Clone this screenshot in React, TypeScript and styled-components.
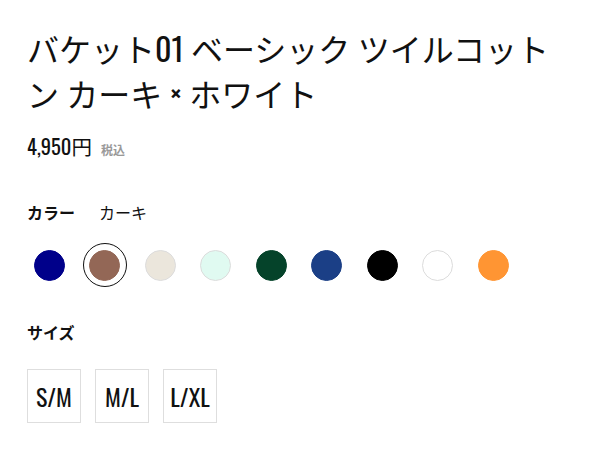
import React from "react";
import styled, { createGlobalStyle } from "styled-components";

const GlobalStyle = createGlobalStyle`
  html, body { margin: 0; padding: 0; background: #fff; }
  body { font-family: Oswald, "Noto Sans CJK JP", sans-serif; color: #111; }
  * { box-sizing: border-box; }
`;

const Page = styled.div`
  width: 600px;
  height: 450px;
  padding: 25px 27px 0 27px;
  overflow: hidden;
`;

const Title = styled.h1`
  margin: 0;
  font-family: Oswald, "Noto Sans CJK JP", sans-serif;
  font-weight: 400;
  font-size: 32px;
  line-height: 45px;
  color: #111;
  letter-spacing: 0;
`;

const Latin = styled.span`
  font-weight: 400;
`;

const Price = styled.div`
  margin-top: 17px;
  display: flex;
  align-items: baseline;
  font-family: Oswald, "Noto Sans CJK JP", sans-serif;
  font-size: 20.5px;
  line-height: 28px;
  font-weight: 400;
  color: #111;
`;

const Tax = styled.span`
  margin-left: 9px;
  font-family: "Noto Sans CJK JP", sans-serif;
  font-size: 12px;
  font-weight: 700;
  color: #999;
`;

const OptionLabel = styled.div<{ $mt: number }>`
  margin-top: ${(p) => p.$mt}px;
  display: flex;
  align-items: center;
  gap: 24px;
  font-family: "Noto Sans CJK JP", sans-serif;
  font-size: 16px;
  line-height: 24px;
`;

const LabelName = styled.span`
  font-weight: 700;
  color: #111;
`;

const LabelValue = styled.span`
  font-weight: 400;
  color: #111;
`;

const Swatches = styled.div`
  margin-top: 19.5px;
  display: flex;
  gap: 11.5px;
`;

const Swatch = styled.div<{ $selected?: boolean }>`
  width: 44px;
  height: 44px;
  border-radius: 50%;
  display: flex;
  align-items: center;
  justify-content: center;
  border: 1px solid ${(p) => (p.$selected ? "#111" : "transparent")};
`;

const Dot = styled.div<{ $color: string; $edge?: boolean }>`
  width: 31px;
  height: 31px;
  border-radius: 50%;
  background: ${(p) => p.$color};
  border: 1px solid ${(p) => (p.$edge ? "#dcdcdc" : p.$color)};
`;

const Sizes = styled.div`
  margin-top: 25px;
  display: flex;
  gap: 14px;
`;

const SizeBox = styled.div`
  width: 54px;
  height: 54px;
  border: 1px solid #dedede;
  display: flex;
  align-items: center;
  justify-content: center;
  font-family: Oswald, sans-serif;
  font-size: 24px;
  font-weight: 400;
  color: #111;
`;

const colors: { c: string; edge?: boolean; selected?: boolean }[] = [
  { c: "#00008a" },
  { c: "#936756", selected: true },
  { c: "#ebe6dc", edge: true },
  { c: "#e0faf1", edge: true },
  { c: "#05432a" },
  { c: "#1b3f86" },
  { c: "#000000" },
  { c: "#ffffff", edge: true },
  { c: "#ff9533" },
];

export default function App() {
  return (
    <>
      <GlobalStyle />
      <Page>
        <Title>
          バケット<Latin>01</Latin> ベーシック ツイルコットン カーキ × ホワイト
        </Title>
        <Price>
          4,950円<Tax>税込</Tax>
        </Price>
        <OptionLabel $mt={35.5}>
          <LabelName>カラー</LabelName>
          <LabelValue>カーキ</LabelValue>
        </OptionLabel>
        <Swatches>
          {colors.map((s, i) => (
            <Swatch key={i} $selected={s.selected}>
              <Dot $color={s.c} $edge={s.edge} />
            </Swatch>
          ))}
        </Swatches>
        <OptionLabel $mt={33}>
          <LabelName>サイズ</LabelName>
        </OptionLabel>
        <Sizes>
          <SizeBox>S/M</SizeBox>
          <SizeBox>M/L</SizeBox>
          <SizeBox>L/XL</SizeBox>
        </Sizes>
      </Page>
    </>
  );
}
